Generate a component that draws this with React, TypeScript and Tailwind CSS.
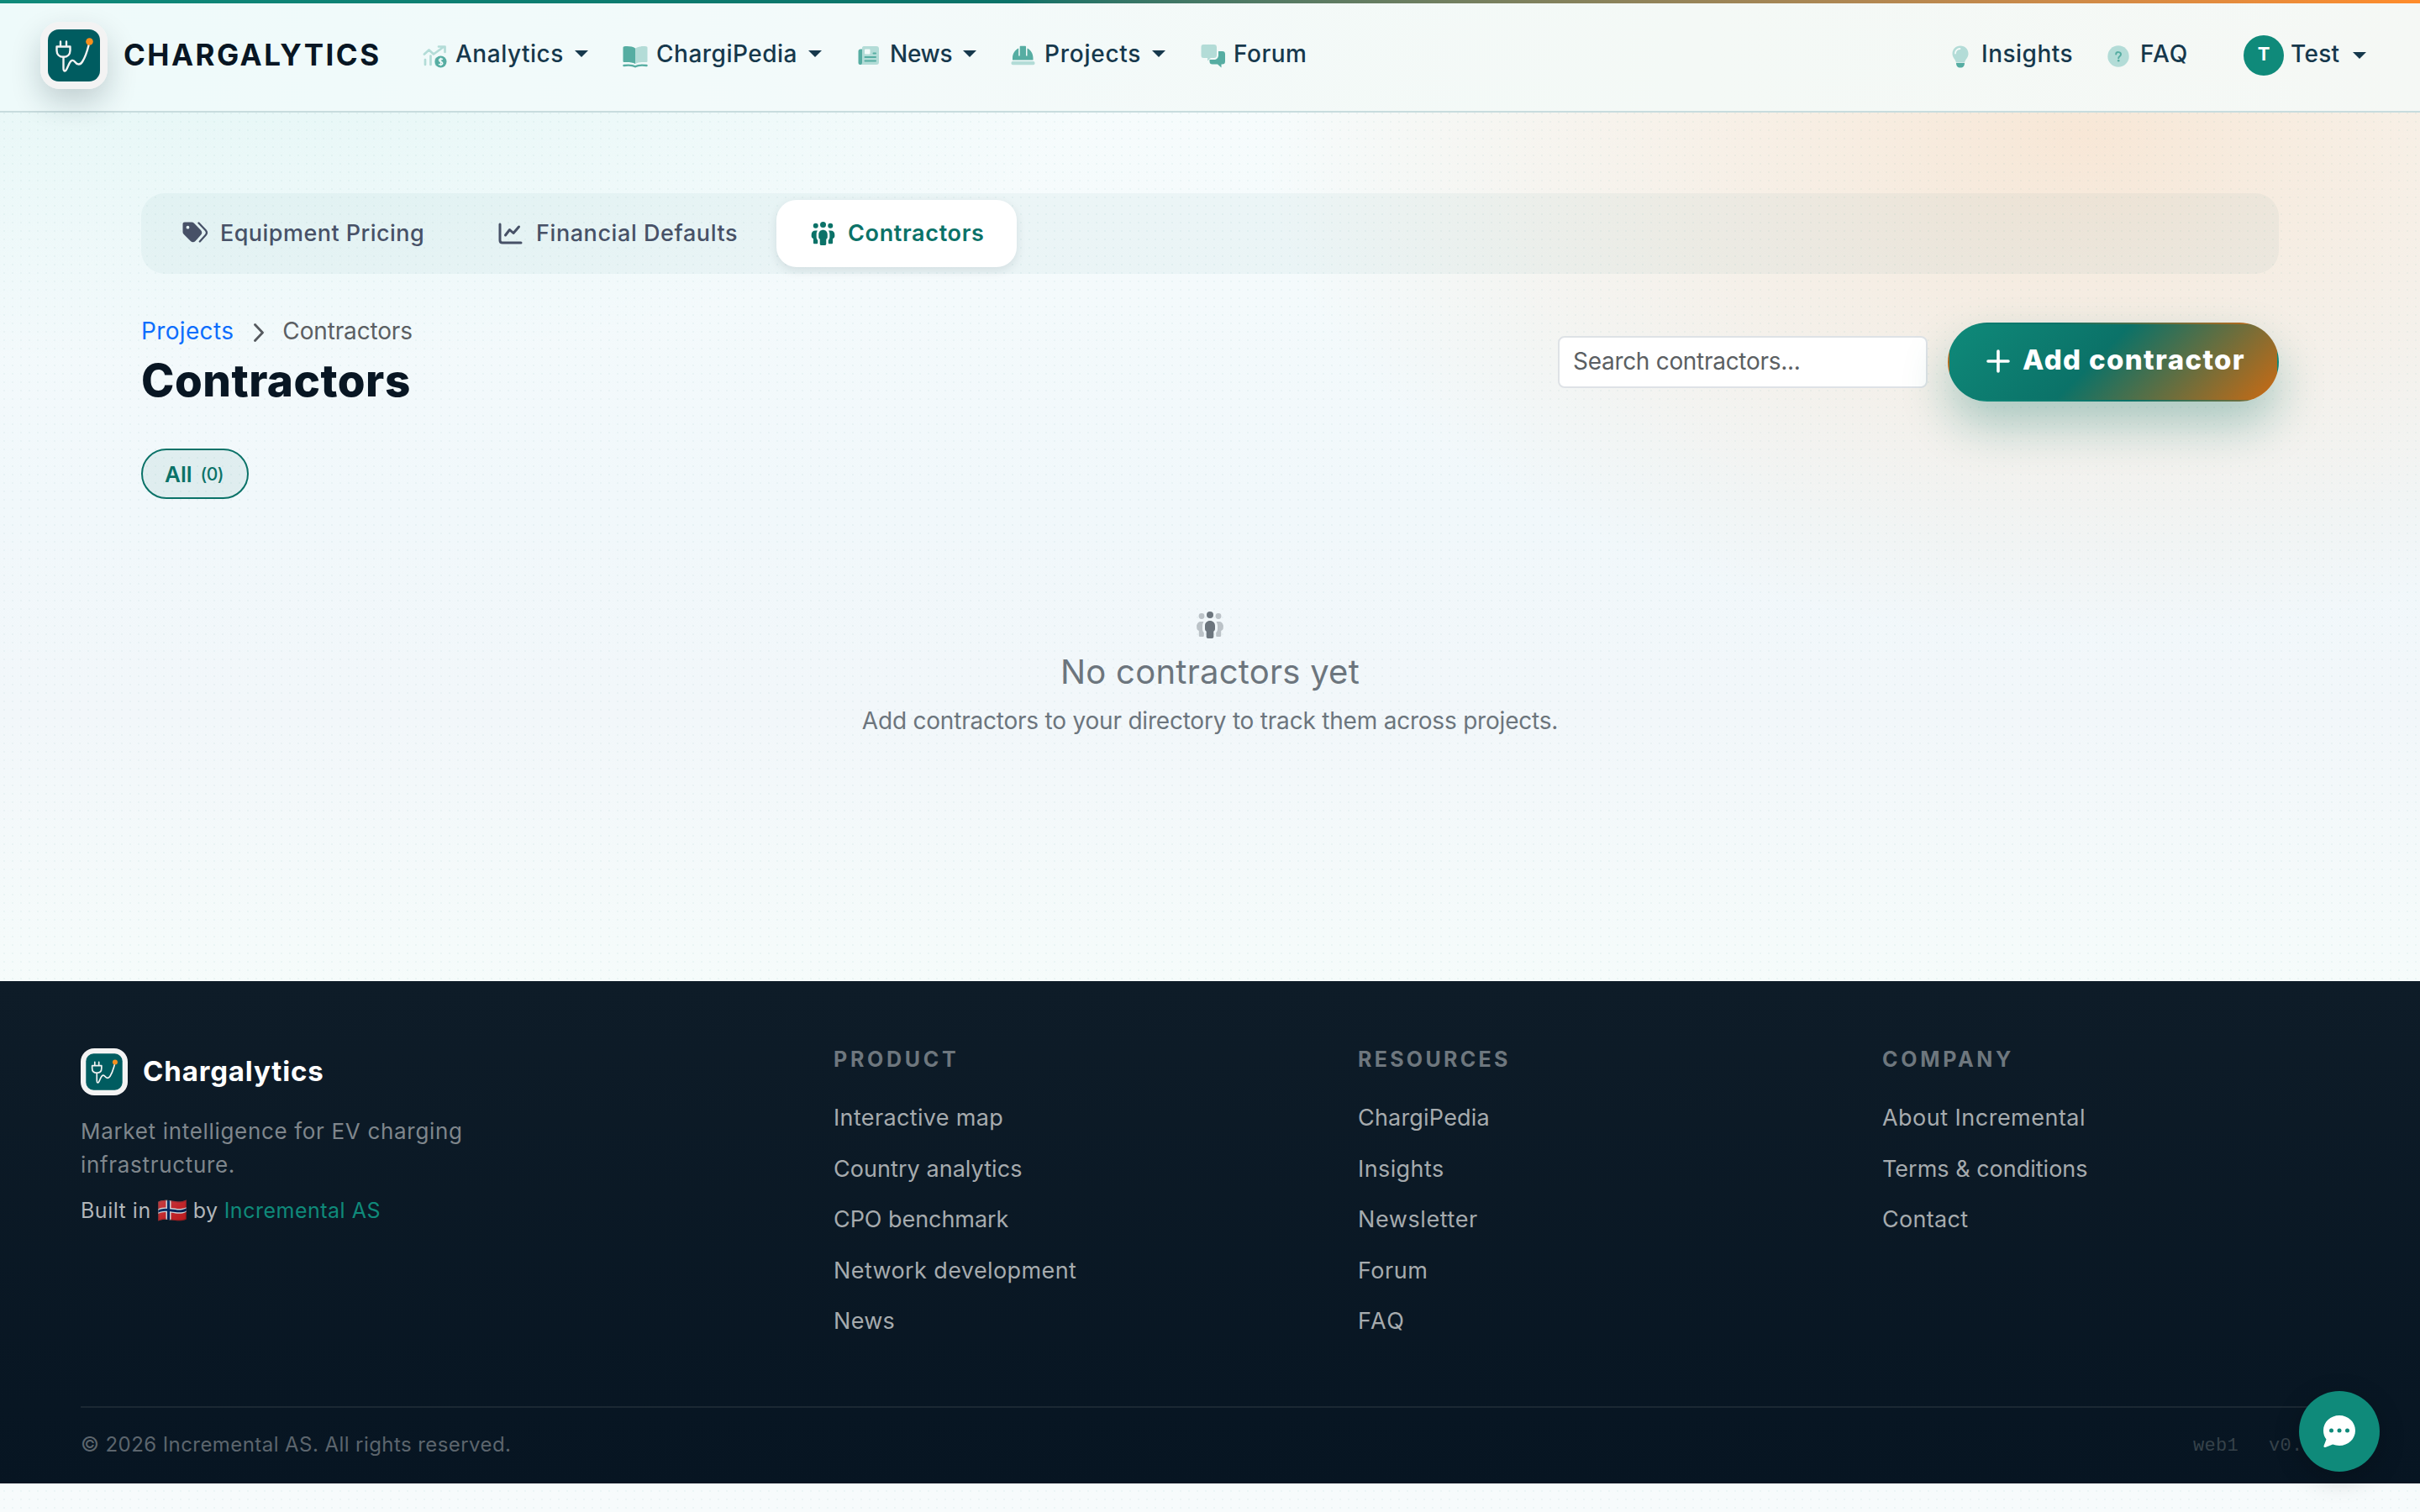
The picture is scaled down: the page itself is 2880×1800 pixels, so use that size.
import { ReactNode } from "react";

const footerColumns = [
  {
    title: "PRODUCT",
    titleClass: "tracking-[3.7px]",
    links: [
      { label: "Interactive map", style: "tracking-[0.35px]" },
      { label: "Country analytics", style: "tracking-[0.05px]" },
      { label: "CPO benchmark", style: "tracking-[-0.05px]" },
      { label: "Network development", style: "tracking-[0.4px]" },
      { label: "News", style: "tracking-[0.3px]" },
    ],
  },
  {
    title: "RESOURCES",
    titleClass: "tracking-[3.3px]",
    links: [
      { label: "ChargiPedia", style: "tracking-[0.2px]" },
      { label: "Insights", style: "tracking-[0.4px]" },
      { label: "Newsletter", style: "tracking-[0.6px]" },
      { label: "Forum", style: "tracking-[0.5px]" },
      { label: "FAQ", style: "tracking-[1.5px]" },
    ],
  },
  {
    title: "COMPANY",
    titleClass: "tracking-[3.7px]",
    links: [
      { label: "About Incremental", style: "tracking-[0.48px]" },
      { label: "Terms & conditions", style: "tracking-[0px]" },
      { label: "Contact", style: "tracking-[0.3px]" },
    ],
  },
]

function Logo({ size }: { size: string }) {
  return (
    <svg viewBox="0 0 80 80" className={size}>
      <rect width="80" height="80" rx="23" fill="#f3f3f3" />
      <rect x="9" y="9" width="62" height="62" rx="13" fill="#005c60" />
      <g fill="none" stroke="#f3f3f3" strokeWidth="2.4" strokeLinecap="round" strokeLinejoin="round">
        <path d="M24 23.5V29M31 23.5V29M19.5 29.5H35.500V34C35.500 38.500 32.500 41.800 27.500 41.800S19.500 38.500 19.500 34Z" />
        <path d="M27.500 42V55C27.500 59.500 30 59.500 31.500 56L34.500 49.500C36.500 45.500 39 44.500 41.500 48C44 51.500 47.500 51.500 50 47.500C53.500 42 55 38 57.500 28" />
      </g>
      <circle cx="58.500" cy="23.500" r="4.300" fill="#f7901e" />
    </svg>
  )
}

function Caret({ style = "mb-1" }: { style?: string }) {
  return (
    <svg viewBox="0 0 16 8" className={"h-2 w-4 shrink-0 " + style} fill="#16384c">
      <path d="M0 0H16L8 8Z" />
    </svg>
  )
}

function AnalyticsIcon() {
  return (
    <svg viewBox="0 0 30 28" className="h-7 w-[30px]">
      <g fill="none" stroke="#b3dcd7" strokeWidth="2.700" strokeLinecap="round" strokeLinejoin="round">
        <path d="M2 11.500L7.500 6.500L13 11.500L24 3.500M19 2.500H26.500V9" />
        <path d="M3 18V24M9.500 13.500V24M16 17V24" />
      </g>
      <circle cx="21.500" cy="20.500" r="7" fill="#56ada2" />
      <path d="M24 17.600C22.500 16.700 19.600 16.700 19.600 18.700C19.600 20.900 23.800 20.100 23.800 22.400C23.800 24.400 20.700 24.300 19 23.300M21.600 15.700V25.300" fill="none" stroke="#f0fafa" strokeWidth="1.500" />
    </svg>
  )
}

function BookIcon() {
  return (
    <svg viewBox="0 0 30 28" className="h-7 w-[30px]">
      <path d="M15 4.500C12 2.200 6 1.800 2 2.300C1 2.400 0.500 3 0.500 4V19.500C0.500 20.500 1 21 2 21C7 20.700 11.500 21 15 23Z" fill="#56ada2" />
      <path d="M15 4.500C18 2.200 24 1.800 28 2.300C29 2.400 29.500 3 29.500 4V19.500C29.500 20.500 29 21 28 21C23 20.700 18.500 21 15 23Z" fill="#b3dcd7" />
      <path d="M1.500 25C7 24.300 11.500 24.300 15 26.300C18.500 24.300 23 24.300 28.500 25" fill="none" stroke="#56ada2" strokeWidth="2.400" strokeLinecap="round" />
    </svg>
  )
}

function NewsIcon() {
  return (
    <svg viewBox="0 0 26 24" className="mb-0.5 h-6 w-[26px]">
      <path d="M3 4.500H6V23H2.500C1 23 0.500 22 0.500 20.500V7C0.500 5.500 1.500 4.500 3 4.500Z" fill="#56ada2" />
      <path d="M7 1H22C24 1 25 2 25 4V20C25 22 24 23 22 23H3.500C4.700 22.500 5 21.500 5 20V3C5 2 5.700 1 7 1Z" fill="#b3dcd7" />
      <rect x="8" y="4.500" width="6.500" height="6" rx="1" fill="#f3fbfa" />
      <path d="M18.500 9.500H21M8.500 14H21M8.500 18.500H21" stroke="#56ada2" strokeWidth="2" strokeLinecap="round" />
    </svg>
  )
}

function HelmetIcon() {
  return (
    <svg viewBox="0 0 29 24" className="mb-0.5 h-6 w-[29px]">
      <path d="M9.200 3.500C4.700 5.500 2 10 2 15V17.500H26.500V15C26.500 10 24 5.500 19.500 3.500V12.500H18V1.500C18 1 17.500 0.800 17 0.800H11.700C11.200 0.800 10.700 1 10.700 1.500V12.500H9.200Z" fill="#56ada2" />
      <rect x="0.500" y="19" width="28" height="4.300" rx="1.800" fill="#b3dcd7" />
    </svg>
  )
}

function ForumIcon() {
  return (
    <svg viewBox="0 0 30 30" className="h-[30px] w-[30px]">
      <path d="M3.500 1H15.500C18 1 19 2 19 4.500V13.500C19 16 18 17 15.500 17H12L8 20.500V17H3.500C1 17 0.500 16 0.500 13.500V4.500C0.500 2 1 1 3.500 1Z" fill="#b3dcd7" />
      <path d="M21 9H25.500C28 9 29 10 29 12.500V21C29 23.500 28 24.500 25.500 24.500H24.500V28.500L20 24.500H14C11.500 24.500 10.500 23.500 10.500 21V19H15.500C19 19 21 17 21 13.500Z" fill="#56ada2" />
    </svg>
  )
}

function BulbIcon() {
  return (
    <svg viewBox="0 0 20 27" className="h-[27px] w-5">
      <path d="M10 0.500C15.500 0.500 19.500 4.500 19.500 10C19.500 14.500 16 16.500 15 20.500H5C4 16.500 0.500 14.500 0.500 10C0.500 4.500 4.500 0.500 10 0.500Z" fill="#b3dcd7" />
      <path d="M4 9.500C4 6.500 6.500 4 9.500 4" fill="none" stroke="#f3fbf9" strokeWidth="1.800" strokeLinecap="round" />
      <path d="M5 21H15C15 24.500 13.500 26.500 10 26.500S5 24.500 5 21Z" fill="#56ada2" />
    </svg>
  )
}

function QuestionIcon() {
  return (
    <svg viewBox="0 0 26 26" className="h-[26px] w-[26px]">
      <circle cx="13" cy="13" r="12.700" fill="#b3dcd7" />
      <path d="M10.200 10.500C10.400 7.200 16 7.400 16 10.700C16 12.800 13.200 13 13.200 15.200" fill="none" stroke="#56ada2" strokeWidth="2" strokeLinecap="round" />
      <circle cx="13.200" cy="18.300" r="1.300" fill="#56ada2" />
    </svg>
  )
}

function PeopleIcon({ style, side }: { style: string, side: string }) {
  return (
    <svg viewBox="0 0 32 32" className={style} fill="currentColor">
      <circle cx="16" cy="4" r="4" />
      <path d="M16 11C19.500 11 22 13.500 22 17V20.500C22 22 21.400 23 20.300 23.700V30C20.300 31.300 19.500 32 18.300 32H13.700C12.500 32 11.700 31.300 11.700 30V23.700C10.600 23 10 22 10 20.500V17C10 13.500 12.500 11 16 11Z" />
      <g className={side}>
        <circle cx="6" cy="5.500" r="3.400" />
        <circle cx="26" cy="5.500" r="3.400" />
        <path d="M8.500 12C7.600 13.500 7 15.200 7 17V20.500C7 22.500 7.700 24 8.800 25.200V28.500C8.800 29.500 8.200 30 7.200 30H4.500C3.500 30 2.800 29.500 2.800 28.500V23C1 22.200 0.200 21 0.200 19.500V17.500C0.200 14 2.500 12 5.500 12Z" />
        <path d="M23.500 12C24.400 13.500 25 15.200 25 17V20.500C25 22.500 24.300 24 23.200 25.200V28.500C23.200 29.500 23.800 30 24.800 30H27.500C28.500 30 29.200 29.500 29.200 28.500V23C31 22.200 31.800 21 31.800 19.500V17.500C31.800 14 29.500 12 26.500 12Z" />
      </g>
    </svg>
  )
}

function TagsIcon() {
  return (
    <svg viewBox="0 0 31 26" className="h-[26px] w-[31px]">
      <path d="M2.800 0.500H11C12.200 0.500 13.200 0.900 14 1.700L22 10C23.700 11.700 23.700 14.100 22 15.800L15.500 23C13.800 24.700 11.500 24.700 9.800 23L1.800 15C1 14.200 0.500 13.200 0.500 12V2.800C0.500 1.400 1.400 0.500 2.800 0.500ZM6.500 4.800A1.900 1.900 0 1 0 6.500 8.600A1.900 1.900 0 1 0 6.500 4.800Z" fill="#475167" />
      <path d="M19.500 1.500L27.800 10.300C29.300 12 29.300 14 27.800 15.700L20.800 23.500" fill="none" stroke="#475167" strokeWidth="2.300" strokeLinecap="round" />
    </svg>
  )
}

function ChartIcon() {
  return (
    <svg viewBox="0 0 29 26" className="h-[26px] w-[29px]" fill="none" stroke="#475167" strokeWidth="3" strokeLinecap="round" strokeLinejoin="round">
      <path d="M2 2V21C2 23 3 24 5 24H27" />
      <path d="M8.500 15L13.500 8.500L18 12.500L24.500 5" />
    </svg>
  )
}

function NavItem({ icon, label, width, style, caret = true }: { icon: ReactNode, label: string, width: string, style: string, caret?: boolean }) {
  return (
    <a className={"flex shrink-0 items-center " + width}>
      <span className="mt-0.5 flex w-[39px] shrink-0 items-center">{icon}</span>
      <span className={"mb-1 text-[28px] font-medium text-[#16384c] " + style}>{label}</span>
      {caret && <Caret style="mb-1 ml-[13px]" />}
    </a>
  )
}

export default function App() {
  return (
    <div className="min-h-[1800px] w-[2880px] bg-[radial-gradient(circle_at_5px_5px,rgba(15,118,110,0.045)_1px,transparent_1.500px),radial-gradient(ellipse_980px_600px_at_2480px_160px,rgba(255,138,42,0.18),transparent),radial-gradient(ellipse_1100px_440px_at_260px_0px,rgba(20,184,166,0.09),transparent),linear-gradient(180deg,#f8fdfd_0px,#f1f8fb_600px,#f2f7fa_850px,#f6fcfb_1200px,#f7fbfc_1800px)] bg-[size:10px_10px,auto,auto,auto] font-['Inter',sans-serif] text-[#081623] whitespace-nowrap">
      <header className="h-[134px] border-b-2 border-[#c8dcde] bg-[linear-gradient(90deg,#eefafa,#f3fafa_35%,#f4f9f6_70%,#f5f8f5)]">
        <div className="h-1 bg-linear-to-r from-[#0f8a7a] via-[#0b7268] via-42% to-[#ff8c2a]"></div>
        <div className="flex h-[124px] items-center pr-16 pl-12">
          <div className="rounded-[23px] shadow-[0_16px_36px_rgba(8,40,50,0.2)]">
            <Logo size="h-20 w-20" />
          </div>
          <span className="mb-0.5 ml-[19px] w-[356px] text-[35px] font-bold tracking-[2.450px]">CHARGALYTICS</span>
          <NavItem icon={<AnalyticsIcon />} label="Analytics" width="w-[238px]" style="tracking-[0.520px]" />
          <NavItem icon={<BookIcon />} label="ChargiPedia" width="w-[280px]" style="ml-px tracking-[0.500px]" />
          <NavItem icon={<NewsIcon />} label="News" width="w-[182px]" style="-ml-px tracking-[-0.300px]" />
          <NavItem icon={<HelmetIcon />} label="Projects" width="w-[226px]" style="ml-px tracking-[0.750px]" />
          <NavItem icon={<ForumIcon />} label="Forum" width="" style="tracking-[0.500px]" caret={false} />
          <div className="ml-auto flex items-center">
            <a className="flex w-[185px] items-center">
              <span className="mt-0.5 w-[35px]"><BulbIcon /></span>
              <span className="mb-1 text-[28px] font-medium tracking-[0.500px] text-[#16384c]">Insights</span>
            </a>
            <a className="flex w-[162px] items-center">
              <span className="mt-0.5 w-[39px]"><QuestionIcon /></span>
              <span className="mb-1 text-[28px] font-medium tracking-[1px] text-[#16384c]">FAQ</span>
            </a>
            <a className="flex items-center">
              <span className="flex h-12 w-12 items-center justify-center rounded-full bg-[#0f8a7a] pb-1 text-[22px] font-bold text-white">T</span>
              <span className="mb-1 ml-2 w-[74px] text-[28px] font-medium tracking-[0.300px] text-[#16384c]">Test</span>
              <Caret style="" />
            </a>
          </div>
        </div>
      </header>

      <main className="h-[1034px] px-[168px] pt-24">
        <div className="flex h-24 gap-2 rounded-[28px] bg-[rgba(15,118,110,0.045)] p-2 text-[27px] font-medium text-[#475167]">
          <a className="flex w-[369px] items-center pl-[41px]">
            <span className="mb-0.5 w-[45px]"><TagsIcon /></span>
            <span className="mt-px tracking-[0.450px]">Equipment Pricing</span>
          </a>
          <a className="flex w-[363px] items-center pl-10">
            <span className="w-[45px]"><ChartIcon /></span>
            <span className="mt-px tracking-[0.580px]">Financial Defaults</span>
          </a>
          <a className="flex w-[286px] items-center rounded-[24px] bg-white pl-[41px] font-semibold text-[#0b7268] shadow-[0_4px_12px_rgba(8,40,50,0.1)]">
            <span className="w-[44px]"><PeopleIcon style="h-7 w-[29px]" side="" /></span>
            <span className="mt-px tracking-[0.650px]">Contractors</span>
          </a>
        </div>

        <div className="mt-12 flex h-[114px] items-center justify-between">
          <div className="h-[114px]">
            <div className="flex h-10 items-center text-[28px]">
              <a className="tracking-[0.350px] text-[#0d6efd]">Projects</a>
              <svg viewBox="0 0 12 22" className="mt-1 mr-[22px] ml-6 h-[22px] w-3" fill="none" stroke="#55595e" strokeWidth="2.800" strokeLinecap="round" strokeLinejoin="round">
                <path d="M1.500 1.500L10.500 11L1.500 20.500" />
              </svg>
              <span className="tracking-[-0.150px] text-[#5b5f63]">Contractors</span>
            </div>
            <h1 className="mt-2.5 text-[53px] leading-[58px] font-extrabold tracking-[0.500px]">Contractors</h1>
          </div>
          <div className="flex items-center">
            <input placeholder="Search contractors..." className="h-[62px] w-[440px] rounded-lg border-2 border-[#dee2e6] bg-white px-4 pb-0.5 text-[28px] tracking-[-0.300px] placeholder:text-[#5b5f63]" />
            <button className="ml-6 flex h-[94px] w-[394px] items-center rounded-full border-2 border-transparent bg-[linear-gradient(135deg,#0f8a7a_0%,#0b7268_45%,#cc6a12_100%)] pl-[44px] text-[33px] font-extrabold text-white shadow-[0_28px_56px_rgba(11,114,104,0.32)]">
              <svg viewBox="0 0 28 28" className="mb-0.5 h-7 w-7" stroke="white" strokeWidth="3.600" strokeLinecap="round">
                <path d="M14 2V26M2 14H26" />
              </svg>
              <span className="mb-1 ml-[15px] tracking-[1.350px]">Add contractor</span>
            </button>
          </div>
        </div>

        <button className="mt-[46px] flex h-[60px] w-32 items-center rounded-full border-2 border-[#0b7268] bg-[rgba(11,114,104,0.08)] pl-[26px] text-[26px] font-semibold text-[#0b7268]">
          All <span className="mt-0.5 ml-2.5 text-[21px] font-medium tracking-[-0.500px]">(0)</span>
        </button>

        <div className="mt-[134px] flex flex-col items-center text-[#6c757d]">
          <PeopleIcon style="h-8 w-8" side="opacity-40" />
          <p className="mt-4 text-[40px] leading-[48px] tracking-[0.250px]">No contractors yet</p>
          <p className="mt-[13px] text-[28px] leading-[42px] tracking-[-0.210px]">Add contractors to your directory to track them across projects.</p>
        </div>
      </main>

      <footer className="h-[598px] bg-linear-to-b from-[#0e1c28] to-[#071522] px-24 pt-20">
        <div className="grid h-[426px] grid-cols-[896px_624px_624px_1fr]">
          <div>
            <div className="flex items-center">
              <Logo size="h-14 w-14" />
              <span className="mb-[3px] ml-[18px] text-[33px] leading-[40px] font-bold tracking-[0.850px] text-white">Chargalytics</span>
            </div>
            <p className="mt-[23px] text-[26px] leading-[40px] tracking-[0.680px] text-[#7f868c]">
              Market intelligence for EV charging<br />infrastructure.
            </p>
            <p className="mt-[14px] flex text-[25px] leading-[40px] tracking-[0.500px] text-[#b2b6b9]">
              Built in
              <span className="ml-[7px] w-[43px] text-[29px] tracking-normal opacity-80">🇳🇴</span>
              <span className="w-[37px]">by</span>
              <a className="tracking-[0.500px] text-[#0f8a7a]">Incremental AS</a>
            </p>
          </div>
          {footerColumns.map(col => (
            <div key={col.title} className="-mt-[7px]">
              <h6 className={"text-[25px] leading-[40px] font-bold text-[#6e777e] " + col.titleClass}>{col.title}</h6>
              <ul className="mt-[30px] flex flex-col gap-[20.500px] text-[27px] leading-[40px] text-[#a6abae]">
                {col.links.map(link => <li key={link.label} className={link.style}>{link.label}</li>)}
              </ul>
            </div>
          ))}
        </div>
        <div className="flex justify-between border-t-2 border-[#1b2833] pt-6 leading-[40px]">
          <span className="text-[24px] tracking-[0.430px] text-[#5c656d]">© 2026 Incremental AS. All rights reserved.</span>
          <span className="flex pt-0.5 font-['Liberation_Mono',monospace] text-[22px] tracking-[0.300px] text-[#36424a]">
            <span className="w-[90px]">web1</span>
            <span className="w-[84px]">v0.</span>
          </span>
        </div>
      </footer>

      <button className="fixed right-12 bottom-12 flex h-24 w-24 items-center justify-center rounded-full bg-[#0f8a7a] shadow-[0_8px_32px_rgba(0,0,0,0.2)]">
        <svg viewBox="0 0 38 38" className="mb-px h-[38px] w-[38px]">
          <path d="M19 0C29.500 0 38 7.800 38 18S29.500 36 19 36C16.200 36 13.500 35.500 11.200 34.600L2.500 38C1 38.500 0 37.500 0.600 36L3.500 28.500C1.200 25.500 0 22 0 18C0 7.800 8.500 0 19 0Z" fill="white" />
          <circle cx="9.500" cy="18" r="2.500" fill="#0f8a7a" />
          <circle cx="19" cy="18" r="2.500" fill="#0f8a7a" />
          <circle cx="28.500" cy="18" r="2.500" fill="#0f8a7a" />
        </svg>
      </button>
    </div>
  )
}
